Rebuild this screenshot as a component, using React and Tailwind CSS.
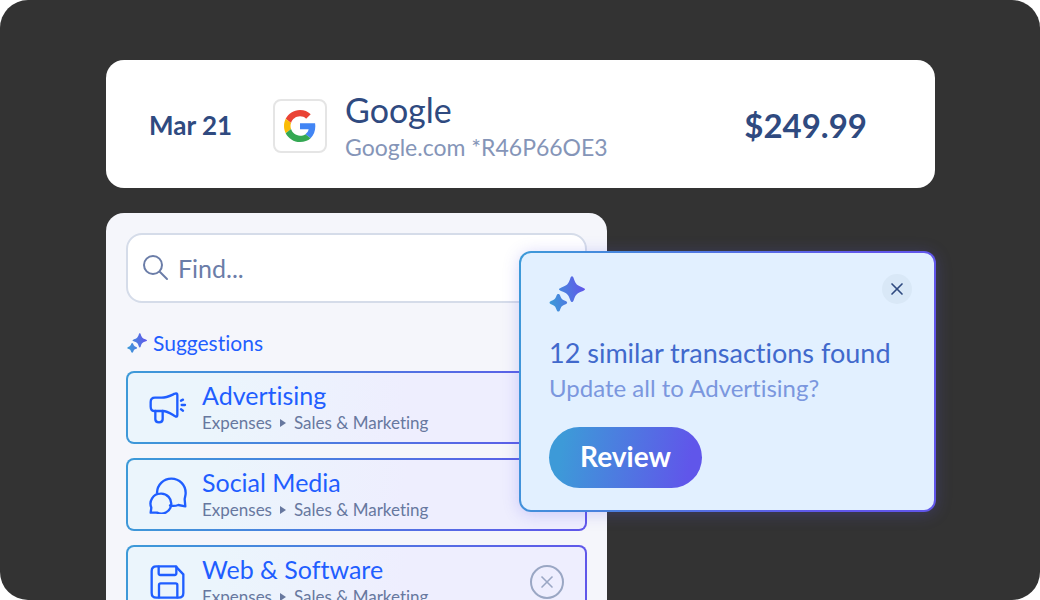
import { useId } from 'react';
import { X } from 'lucide-react';

function Sparkles({ className }) {
  const id = useId();
  return (
    <svg viewBox="0 0 108 108" className={className} aria-hidden="true">
      <defs>
        <linearGradient id={id} gradientUnits="userSpaceOnUse" x1="0" y1="60" x2="108" y2="40">
          <stop offset="0" stopColor="#3d9ad8" />
          <stop offset="1" stopColor="#6056ea" />
        </linearGradient>
      </defs>
      <g fill={`url(#${id})`}>
        <path d="M69 1C72 1 73 4 74 7C80 25 84 29 102 35C110 38 110 42 102 45C84 51 80 55 74 73C72 80 66 80 64 73C58 55 54 51 36 45C28 42 28 38 36 35C54 29 58 25 64 7C65 4 66 1 69 1Z" />
        <path d="M28 54C30 54 32 55 33 58C37 69 39 71 50 75C56 78 56 82 50 85C39 89 37 91 33 102C31 108 25 108 23 102C19 91 17 89 6 85C0 82 0 78 6 75C17 71 19 69 23 58C24 55 26 54 28 54Z" />
      </g>
    </svg>
  );
}

function GoogleLogo({ className }) {
  return (
    <svg viewBox="0 0 48 48" className={className} role="img" aria-label="Google">
      <path fill="#EA4335" d="M24 9.5c3.54 0 6.71 1.22 9.21 3.6l6.85-6.85C35.9 2.38 30.47 0 24 0 14.62 0 6.51 5.38 2.56 13.22l7.98 6.19C12.43 13.72 17.74 9.5 24 9.5z" />
      <path fill="#4285F4" d="M46.98 24.55c0-1.57-.15-3.09-.38-4.55H24v9.02h12.94c-.58 2.96-2.26 5.48-4.78 7.18l7.73 6c4.51-4.18 7.09-10.36 7.09-17.65z" />
      <path fill="#FBBC05" d="M10.53 28.59c-.48-1.45-.76-2.99-.76-4.59s.27-3.14.76-4.59l-7.98-6.19C.92 16.46 0 20.12 0 24c0 3.88.92 7.54 2.56 10.78l7.97-6.19z" />
      <path fill="#34A853" d="M24 48c6.48 0 11.93-2.13 15.89-5.81l-7.73-6c-2.15 1.45-4.92 2.3-8.16 2.3-6.26 0-11.57-4.22-13.47-9.91l-7.98 6.19C6.51 42.62 14.62 48 24 48z" />
    </svg>
  );
}

function LineIcon({ children }) {
  return (
    <svg
      viewBox="0 0 114 114"
      className="w-[38px] h-[38px] flex-shrink-0"
      fill="none" stroke="#1f5eff" strokeWidth="7"
      strokeLinecap="round" strokeLinejoin="round" aria-hidden="true"
    >
      {children}
    </svg>
  );
}

function Megaphone() {
  return (
    <LineIcon>
      <path d="M5 39Q5 26 18 26H38C54 26 68 18 78 14Q85 11 85 18V78Q85 85 79 82C68 76 56 66 42 66H18Q5 66 5 53Z" />
      <path d="M19 66V91Q19 100 30 100Q41 100 41 91V66" />
      <path d="M96 35L102 32M98 48H108M96 61L102 65" />
    </LineIcon>
  );
}

function Chats() {
  return (
    <LineIcon>
      <path d="M24 50C25 26 44 8 67 8C92 8 110 27 110 51C110 59 107 65 107 70L109 91L88 87C80 90 72 91 63 88" />
      <path d="M34 53A30 30 0 1 1 24 110L5 110L7 95A30 30 0 0 1 34 53Z" />
    </LineIcon>
  );
}

function Floppy() {
  return (
    <LineIcon>
      <path d="M22 10H80L103 34V90Q103 104 89 104H22Q8 104 8 90V24Q8 10 22 10Z" />
      <path d="M29 11V31Q29 36 34 36H77Q82 36 82 31V11" />
      <path d="M30 103V66Q30 61 35 61H80Q85 61 85 66V103" />
    </LineIcon>
  );
}

const suggestions = [
  { name: 'Advertising', group: 'Expenses', parent: 'Sales & Marketing', Icon: Megaphone },
  { name: 'Social Media', group: 'Expenses', parent: 'Sales & Marketing', Icon: Chats },
  { name: 'Web & Software', group: 'Expenses', parent: 'Sales & Marketing', Icon: Floppy, dismissible: true },
];

function SuggestionRow({ name, group, parent, Icon, dismissible }) {
  return (
    <li className="flex items-center h-[73px] rounded-lg border-2 border-transparent px-[21px] [background:linear-gradient(100deg,#ebf5fc_20%,#eeeefe_60%)_padding-box,linear-gradient(100deg,#3d9ad8,#6056ea)_border-box]">
      <button type="button" className="flex flex-1 items-center gap-[15px] text-left cursor-pointer">
        <Icon />
        <span className="flex flex-col">
          <span className="text-[25px] leading-[30px] text-[#1f5eff]">{name}</span>
          <span className="flex items-center gap-2 text-[17px] leading-[26px] text-[#67789f]">
            {group}
            <svg viewBox="0 0 6 8" className="w-[6px] h-2 fill-current" aria-hidden="true">
              <path d="M0 0L6 4L0 8Z" />
            </svg>
            {parent}
          </span>
        </span>
      </button>
      {dismissible && (
        <button
          type="button"
          aria-label={`Dismiss ${name}`}
          className="flex items-center justify-center w-[34px] h-[34px] rounded-full border-2 border-[#9aa7c4] text-[#9aa7c4] cursor-pointer"
        >
          <X className="w-5 h-5" strokeWidth={2} />
        </button>
      )}
    </li>
  );
}

function Transaction() {
  return (
    <header className="flex items-center rounded-[18px] bg-white h-32 pt-[3px] pl-[43px] pr-[68px] text-[#2f4a80]">
      <time className="w-[124px] pb-[2px] text-[26px] leading-8 font-bold">Mar 21</time>
      <div className="flex items-center justify-center w-[54px] h-[54px] rounded-lg border-2 border-[#e5e5e5]">
        <GoogleLogo className="w-8 h-8" />
      </div>
      <div className="ml-[18px] pt-1 flex-1">
        <h1 className="text-[34px] leading-[38px]">Google</h1>
        <p className="text-[23px] leading-9 text-[#8595b8]">Google.com *R46P66OE3</p>
      </div>
      <p className="pb-[2px] text-[33px] leading-10 font-bold">$249.99</p>
    </header>
  );
}

function SimilarPrompt() {
  return (
    <aside className="absolute top-[38px] right-[-1px] w-[417px] rounded-xl border-2 border-transparent px-7 pt-[21px] pb-[22px] shadow-[0_2px_16px_rgba(96,86,234,0.25)] [background:linear-gradient(#e2f0ff,#e2f0ff)_padding-box,linear-gradient(100deg,#3d9ad8,#6056ea_75%)_border-box]">
      <div className="flex items-start justify-between">
        <Sparkles className="w-9 h-9 mt-[2px]" />
        <button
          type="button"
          aria-label="Close"
          className="flex items-center justify-center w-[30px] h-[30px] mr-[-6px] rounded-full bg-[#d9e8f7] text-[#2f4a80] cursor-pointer"
        >
          <X className="w-5 h-5" strokeWidth={2} />
        </button>
      </div>
      <h2 className="mt-[23px] text-[27px] leading-9 whitespace-nowrap text-[#4169cc]">12 similar transactions found</h2>
      <p className="text-2xl leading-[34px] text-[#7b97de]">Update all to Advertising?</p>
      <button
        type="button"
        className="mt-[22px] h-[61px] w-[153px] rounded-full bg-[linear-gradient(100deg,#3d9ad8_10%,#6056ea_90%)] pb-1 text-[28px] leading-8 font-bold text-white cursor-pointer"
      >
        Review
      </button>
    </aside>
  );
}

export default function App() {
  return (
    <main className="h-screen overflow-hidden rounded-[28px] bg-[#333] pl-[106px] pr-[105px] pt-[60px] font-['Lato','Open_Sans',sans-serif] [font-variant-ligatures:none]">
      <Transaction />

      <div className="relative mt-[25px]">
        <section className="w-full max-w-[501px] rounded-t-[18px] bg-[#f5f6fb] p-5">
          {/* Search */}
          <label className="flex items-center gap-2 h-[70px] rounded-2xl border-2 border-[#d5dce9] bg-white px-[14px] text-[#6b7da8]">
            <svg viewBox="0 0 28 28" className="w-7 h-7 flex-shrink-0" fill="none" stroke="currentColor" strokeWidth="2" strokeLinecap="round" aria-hidden="true">
              <circle cx="11" cy="11" r="9" />
              <path d="M18 18L25 25" />
            </svg>
            <input
              type="text"
              aria-label="Find a category"
              placeholder="Find..."
              className="w-full min-w-0 bg-transparent text-[25px] leading-8 outline-none placeholder:text-[#6b7da8]"
            />
          </label>

          {/* Suggestions */}
          <h2 className="mt-6 flex items-center gap-[6px] pl-px text-[21px] leading-8 text-[#1f5eff]">
            <Sparkles className="w-5 h-5" />
            Suggestions
          </h2>
          <ul className="mt-3 flex flex-col gap-[14px]">
            {suggestions.map((s) => (
              <SuggestionRow key={s.name} {...s} />
            ))}
          </ul>
        </section>

        <SimilarPrompt />
      </div>
    </main>
  );
}
